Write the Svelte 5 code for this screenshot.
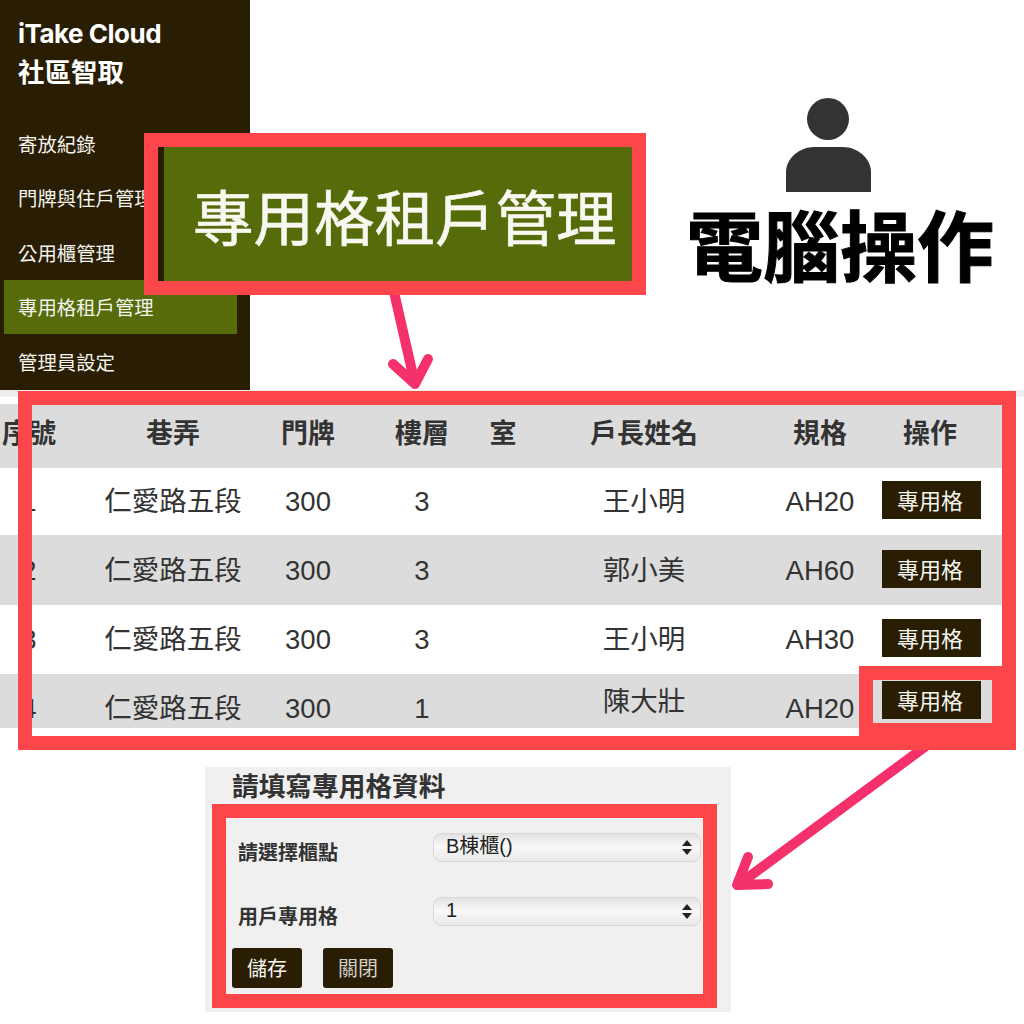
<script>
  const nav = ["寄放紀錄", "門牌與住戶管理", "公用櫃管理", "專用格租戶管理", "管理員設定"]
  const heads = ["序號", "巷弄", "門牌", "樓層", "室", "戶長姓名", "規格", "操作"]
  const rows = [
    { no: 1, floor: 3, name: "王小明", spec: "AH20" },
    { no: 2, floor: 3, name: "郭小美", spec: "AH60" },
    { no: 3, floor: 3, name: "王小明", spec: "AH30" },
    { no: 4, floor: 1, name: "陳大壯", spec: "AH20" }
  ]
</script>

<div class="page">
  <div class="top">
    <aside class="sidebar">
      <div class="brand">iTake Cloud<br /><span>社區智取</span></div>
      <nav>
        {#each nav as item}
          <a href="#top" class:active={item == "專用格租戶管理"}>{item}</a>
        {/each}
      </nav>
    </aside>

    <div class="intro">
      <svg class="person" width="85" height="94" viewBox="0 0 85 94">
        <circle cx="42" cy="21" r="21" />
        <path d="M0 94V74C0 60 14 49 28 49H57C71 49 85 60 85 74V94Z" />
      </svg>
      <h1>電腦操作</h1>
    </div>
  </div>

  <div class="table-wrap">
    <table>
      <colgroup>
        <col style="width: 101px" /><col style="width: 144px" /><col style="width: 126px" /><col style="width: 102px" />
        <col style="width: 60px" /><col style="width: 222px" /><col style="width: 130px" /><col style="width: 117px" />
      </colgroup>
      <thead>
        <tr>
          {#each heads as head}
            <th>{head}</th>
          {/each}
        </tr>
      </thead>
      <tbody>
        {#each rows as row}
          <tr>
            <td>{row.no}</td>
            <td>仁愛路五段</td>
            <td>300</td>
            <td>{row.floor}</td>
            <td></td>
            <td class="name">{row.name}</td>
            <td>{row.spec}</td>
            <td class="act"><button>專用格</button></td>
          </tr>
        {/each}
      </tbody>
    </table>
  </div>

  <section class="panel">
    <h2>請填寫專用格資料</h2>
    <div class="fields">
      <label for="site">請選擇櫃點</label>
      <div class="select">
        <select id="site"><option>B棟櫃()</option></select>
      </div>
      <label for="slot">用戶專用格</label>
      <div class="select">
        <select id="slot"><option>1</option></select>
      </div>
    </div>
    <div class="actions">
      <button>儲存</button>
      <button class="dim">關閉</button>
    </div>
  </section>

  <!-- annotations on top of the screenshot -->
  <svg class="arrows" width="1024" height="1024" viewBox="0 0 1024 1024">
    <path d="M394 292L415 384M393 364L415 384L428 359" />
    <path d="M926 746L742 882M748 857L737 885L768 884" />
  </svg>
  <div class="callout zoomed"><div class="zoomed-label">專用格租戶管理</div></div>
  <div class="frame frame-table"></div>
  <div class="frame frame-button"></div>
  <div class="frame frame-form"></div>
</div>

<style>
  :global(body) {
    margin: 0;
    background: #fff;
  }

  .page {
    position: relative;
    width: 1024px;
    height: 1024px;
    overflow: hidden;
    background: #fff;
    color: #333;
    font-family: "Liberation Sans", "Noto Sans CJK TC", sans-serif;
  }

  .top {
    display: flex;
    height: 390px;
  }

  .sidebar {
    width: 250px;
    flex: none;
    background: #291e03;
    color: #fff;
  }

  .brand {
    padding: 15px 0 0 18px;
    height: 116px;
    box-sizing: border-box;
    font-family: Inter, "Noto Sans CJK TC", sans-serif;
    font-size: 26px;
    font-weight: 700;
    line-height: 38px;
    letter-spacing: -0.5px;
  }

  .brand span {
    font-size: 26.5px;
    letter-spacing: 0;
  }

  nav {
    display: flex;
    flex-direction: column;
  }

  nav a {
    display: flex;
    align-items: center;
    height: 54.5px;
    padding-left: 18px;
    color: #f4f3ee;
    font-size: 19.4px;
    text-decoration: none;
    white-space: nowrap;
  }

  nav a.active {
    margin: 0 13px 0 4px;
    padding-left: 14px;
    background: #566b0a;
  }

  .intro {
    margin-left: auto;
    margin-right: 31px;
    width: 306px;
    padding-top: 98px;
    display: flex;
    flex-direction: column;
    align-items: center;
  }

  .person {
    fill: #333;
    align-self: flex-start;
    margin-left: 99px;
  }

  h1 {
    margin: 6px 0 0;
    color: #000;
    font-family: "Noto Sans CJK TC", sans-serif;
    font-size: 77px;
    font-weight: 700;
    line-height: 90px;
    white-space: nowrap;
    -webkit-text-stroke: 1px #000;
  }

  .table-wrap {
    height: 347px;
    box-sizing: border-box;
    padding-top: 7px;
    border-top: 7px solid #eee;
  }

  table {
    width: 1002px;
    table-layout: fixed;
    border-collapse: collapse;
    font-size: 27.5px;
    line-height: 30px;
    color: #333;
  }

  th,
  td {
    padding: 0;
    text-align: center;
    vertical-align: middle;
    white-space: nowrap;
  }

  th {
    height: 64px;
    font-size: 27px;
    font-weight: 700;
    padding-bottom: 4px;
    box-sizing: border-box;
  }

  thead tr,
  tbody tr:nth-child(even) {
    background: #dcdcdc;
  }

  tbody tr:nth-child(1) td {
    height: 67px;
  }

  tbody tr:nth-child(2) td {
    height: 70px;
    box-sizing: border-box;
    padding-top: 2px;
  }

  tbody tr:nth-child(3) td {
    height: 69px;
  }

  tbody tr:nth-child(4) td {
    height: 54px;
    box-sizing: border-box;
    padding-top: 15px;
  }

  tbody tr:nth-child(4) td.name {
    padding-top: 1px;
  }

  th:first-child,
  td:first-child {
    padding-right: 43px;
  }

  th:last-child {
    padding-right: 27px;
  }

  tbody tr td.act,
  tbody tr:nth-child(4) td.act {
    padding: 0;
  }

  td.act button {
    display: block;
    width: 99px;
    height: 38px;
    margin: 0 0 3px -3px;
    padding: 0 3px 2px 0;
    font-size: 22px;
  }

  button {
    padding: 0;
    border: none;
    background: #291e03;
    color: #f5f4ef;
    font-family: "Noto Sans CJK TC", sans-serif;
    line-height: 1;
  }

  .panel {
    width: 526px;
    height: 245px;
    margin: 30px 0 0 205px;
    box-sizing: border-box;
    padding: 0 30px 0 27px;
    background: #f0f0f0;
  }

  h2 {
    margin: 0;
    font-size: 26.7px;
    font-weight: 700;
    line-height: 40px;
    color: #333;
    white-space: nowrap;
  }

  .fields {
    display: grid;
    grid-template-columns: 195px 268px;
    row-gap: 34px;
    padding: 26px 0 0 6px;
  }

  label {
    padding-top: 10px;
    font-size: 20px;
    font-weight: 700;
    line-height: 20px;
    color: #333;
    white-space: nowrap;
  }

  .select {
    position: relative;
    height: 29px;
  }

  .select::before,
  .select::after {
    content: "";
    position: absolute;
    right: 9px;
    border-left: 5px solid transparent;
    border-right: 5px solid transparent;
    pointer-events: none;
  }

  .select::before {
    top: 7px;
    border-bottom: 6px solid #222;
  }

  .select::after {
    top: 16px;
    border-top: 6px solid #222;
  }

  select {
    appearance: none;
    display: block;
    width: 100%;
    height: 100%;
    padding: 0 0 3px 12px;
    box-sizing: border-box;
    border: 1px solid #d8d8d8;
    border-radius: 8px;
    background: linear-gradient(#e2e2e2, #f8f8f8 45%, #e9e9e9);
    color: #222;
    font-family: "Liberation Sans", "Noto Sans CJK TC", sans-serif;
    font-size: 20px;
  }

  .actions {
    display: flex;
    gap: 21px;
    margin-top: 21px;
  }

  .actions button {
    width: 70px;
    height: 40px;
    border-radius: 3px;
    font-size: 20px;
  }

  .actions .dim {
    color: #cfcfc8;
  }

  .arrows {
    position: absolute;
    inset: 0;
    fill: none;
    stroke: #f5316b;
    stroke-width: 10;
    stroke-linecap: round;
    stroke-linejoin: round;
  }

  .frame,
  .callout {
    position: absolute;
    box-sizing: border-box;
    border: 14px solid #fc4649;
  }

  .zoomed {
    left: 144px;
    top: 133px;
    width: 502px;
    height: 162px;
    background: #566b0a;
  }

  .zoomed-label {
    display: flex;
    align-items: center;
    height: 100%;
    padding-left: 29px;
    border-left: 6px solid #291e03;
    box-sizing: border-box;
    color: #f8f8f0;
    font-family: "Noto Sans CJK TC", sans-serif;
    font-size: 60.5px;
    white-space: nowrap;
    -webkit-text-stroke: 0.6px #f8f8f0;
  }

  .frame-table {
    left: 18px;
    top: 391px;
    width: 998px;
    height: 359px;
  }

  .frame-button {
    left: 859px;
    top: 666px;
    width: 147px;
    height: 71px;
  }

  .frame-form {
    left: 212px;
    top: 804px;
    width: 505px;
    height: 204px;
  }
</style>
